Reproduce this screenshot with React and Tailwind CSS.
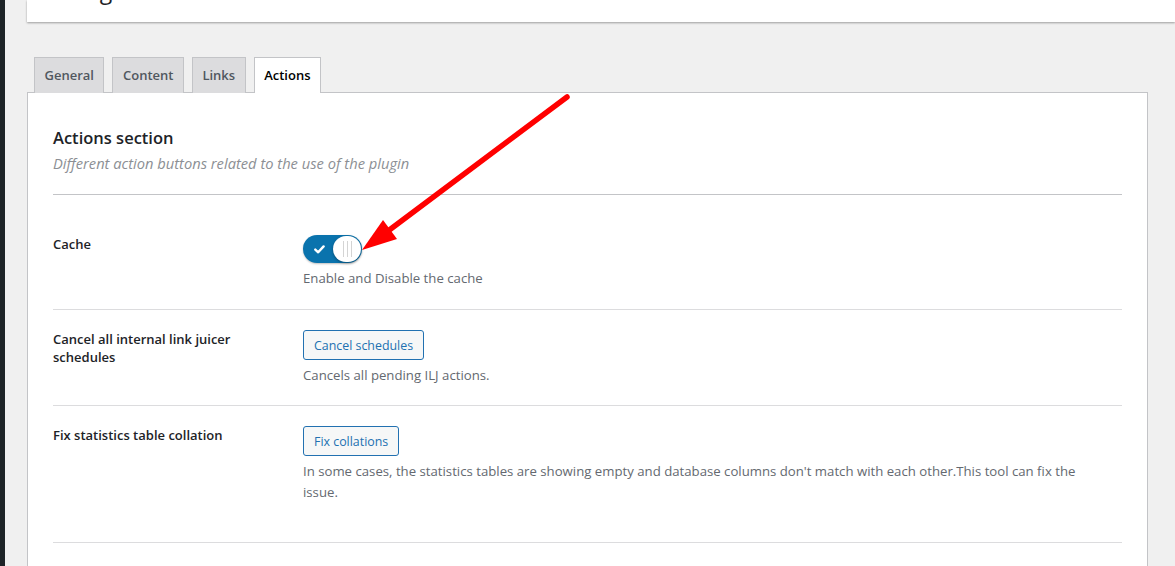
const tabs = ["General", "Content", "Links", "Actions"];

function Toggle() {
  return (
    <div className="relative flex h-[28px] w-[59px] items-center rounded-full bg-[#0a73ad] shadow-[0_1px_2px_rgba(0,0,0,0.25)]">
      <svg className="ml-[11px] h-[9px] w-[11px]" viewBox="0 0 11 9" fill="none">
        <path d="M1.3 4.6 L4.2 7.3 L9.6 1.4" stroke="white" strokeWidth="2.4" strokeLinecap="round" strokeLinejoin="round" />
      </svg>
      <div className="absolute right-[1px] top-[1px] flex h-[26px] w-[28px] items-center justify-center gap-[3px] rounded-full bg-white shadow-[0_1px_3px_rgba(0,0,0,0.35)]">
        <span className="h-[16px] w-px bg-[#d4d4d4]" />
        <span className="h-[16px] w-px bg-[#d4d4d4]" />
        <span className="h-[16px] w-px bg-[#d4d4d4]" />
      </div>
    </div>
  );
}

function Button({ children }) {
  return (
    <button className="h-[30px] rounded-[3px] border border-[#2271b1] bg-[#f6f7f7] px-[10px] text-[12.4px] leading-[29px] text-[#2271b1]">
      {children}
    </button>
  );
}

function Row({ label, children, className }) {
  return (
    <div className={`flex border-b border-[#dcdcde] ${className}`}>
      <div className="w-[250px] shrink-0 pr-[50px] text-[13px] font-semibold leading-[18px] text-[#1d2327]">
        {label}
      </div>
      <div className="flex-1 pr-[10px]">{children}</div>
    </div>
  );
}

export default function App() {
  return (
    <div className="relative flex h-[566px] w-full overflow-hidden bg-[#f0f0f0] font-['Open_Sans','Noto_Sans',sans-serif]">
      <div className="w-[5px] shrink-0 bg-[#1d2327]" />
      <div className="flex-1 pl-[22px]">
        <div className="h-[22px] overflow-hidden bg-white shadow-[0_1px_2px_rgba(0,0,0,0.35)]">
          <h1 className="-mt-[26px] pl-[11px] text-[23px] leading-[32px] text-[#1d2327]">Settings</h1>
        </div>

        <div className="mr-[27px] mt-[35px]">
          <nav className="flex gap-2 pl-[7px]">
            {tabs.map((t) => (
              <div
                key={t}
                className={`relative -mb-px h-[36px] border border-b-0 border-[#c3c4c7] px-[9.5px] text-[13px] font-semibold leading-[34px] ${
                  t === "Actions" ? "z-10 bg-white text-black" : "bg-[#dcdcde] text-[#50575e]"
                }`}
              >
                {t}
              </div>
            ))}
          </nav>

          <div className="h-[500px] border border-[#c3c4c7] bg-white px-[25px] pt-[34px]">
            <h2 className="text-[16.5px] font-semibold leading-[22px] text-[#1d2327]">Actions section</h2>
            <p className="mt-[4px] text-[14.7px] italic leading-[20px] text-[#8c8f94]">
              Different action buttons related to the use of the plugin
            </p>
            <div className="mt-[21px] border-t border-[#c3c4c7]" />

            <Row label="Cache" className="pb-[20px] pt-[40px]">
              <Toggle />
              <p className="mt-[5px] text-[13.2px] leading-[21px] text-[#646970]">Enable and Disable the cache</p>
            </Row>

            <Row label="Cancel all internal link juicer schedules" className="pb-[19px] pt-[20px]">
              <Button>Cancel schedules</Button>
              <p className="mt-[5px] text-[13.2px] leading-[21px] text-[#646970]">Cancels all pending ILJ actions.</p>
            </Row>

            <Row label="Fix statistics table collation" className="border-[#c3c4c7] pb-[39px] pt-[20px]">
              <Button>Fix collations</Button>
              <p className="mt-[5px] text-[13.2px] leading-[21px] text-[#646970]">
                In some cases, the statistics tables are showing empty and database columns don't match with each other.This tool can fix the issue.
              </p>
            </Row>
          </div>
        </div>
      </div>

      <svg className="pointer-events-none absolute inset-0 h-full w-full" viewBox="0 0 1175 566">
        <line x1="567" y1="97" x2="384" y2="234" stroke="#ff0000" strokeWidth="5.5" strokeLinecap="round" />
        <polygon points="362,250 383,220 397,239" fill="#ff0000" />
      </svg>
    </div>
  );
}
